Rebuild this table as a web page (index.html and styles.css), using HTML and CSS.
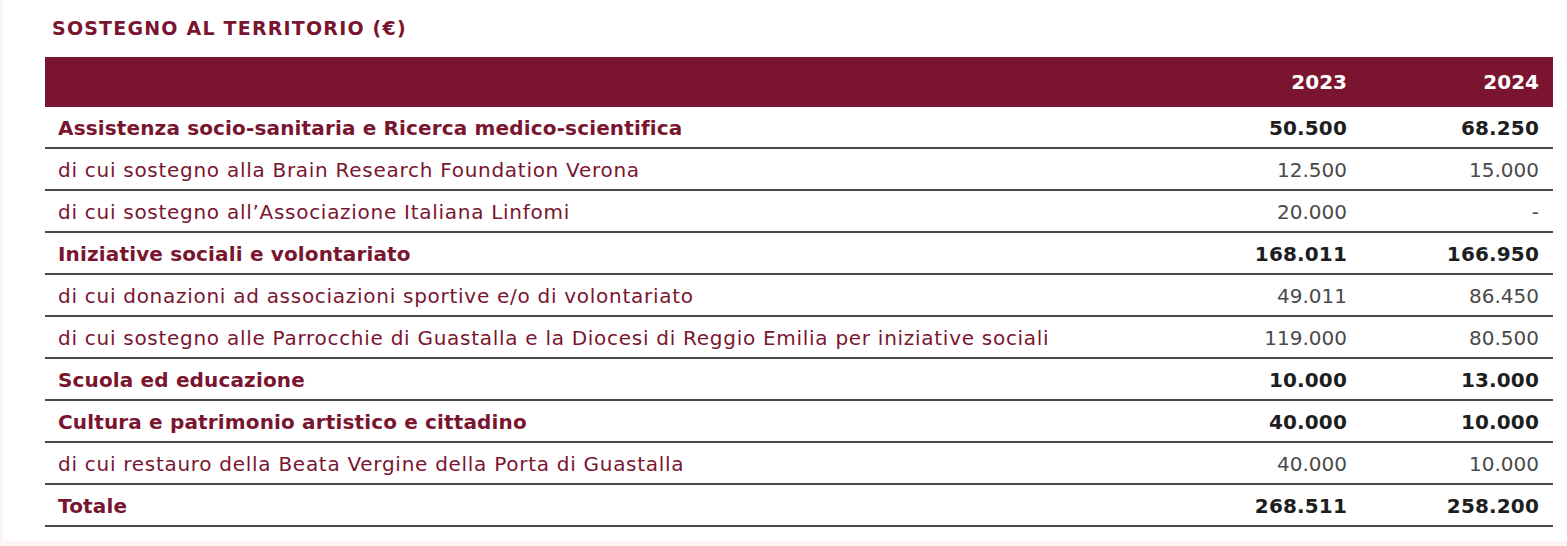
FILE: index.html
```html
<!DOCTYPE html>
<html lang="it">
<head>
<meta charset="utf-8">
<title>Sostegno al territorio</title>
<link rel="stylesheet" href="styles.css">
</head>
<body>
<div class="card">
  <h2 class="title">SOSTEGNO AL TERRITORIO (€)</h2>
  <table class="tbl">
    <thead>
      <tr><th class="lbl"></th><th class="num c1">2023</th><th class="num c2">2024</th></tr>
    </thead>
    <tbody>
      <tr class="main"><td class="lbl">Assistenza socio-sanitaria e Ricerca medico-scientifica</td><td class="num c1">50.500</td><td class="num c2">68.250</td></tr>
      <tr class="sub"><td class="lbl">di cui sostegno alla Brain Research Foundation Verona</td><td class="num c1">12.500</td><td class="num c2">15.000</td></tr>
      <tr class="sub"><td class="lbl">di cui sostegno all’Associazione Italiana Linfomi</td><td class="num c1">20.000</td><td class="num c2">-</td></tr>
      <tr class="main"><td class="lbl">Iniziative sociali e volontariato</td><td class="num c1">168.011</td><td class="num c2">166.950</td></tr>
      <tr class="sub"><td class="lbl">di cui donazioni ad associazioni sportive e/o di volontariato</td><td class="num c1">49.011</td><td class="num c2">86.450</td></tr>
      <tr class="sub"><td class="lbl">di cui sostegno alle Parrocchie di Guastalla e la Diocesi di Reggio Emilia per iniziative sociali</td><td class="num c1">119.000</td><td class="num c2">80.500</td></tr>
      <tr class="main"><td class="lbl">Scuola ed educazione</td><td class="num c1">10.000</td><td class="num c2">13.000</td></tr>
      <tr class="main"><td class="lbl">Cultura e patrimonio artistico e cittadino</td><td class="num c1">40.000</td><td class="num c2">10.000</td></tr>
      <tr class="sub"><td class="lbl">di cui restauro della Beata Vergine della Porta di Guastalla</td><td class="num c1">40.000</td><td class="num c2">10.000</td></tr>
      <tr class="main"><td class="lbl">Totale</td><td class="num c1">268.511</td><td class="num c2">258.200</td></tr>
    </tbody>
  </table>
</div>
</body>
</html>
```

FILE: styles.css
```css
html, body {
  margin: 0;
  padding: 0;
  background: #fbf3f4;
}
body {
  width: 1567px;
  height: 546px;
  font-family: "DejaVu Sans", "Noto Sans", sans-serif;
}
.card {
  margin-left: 3px;
  width: 1564px;
  height: 541px;
  background: #ffffff;
  padding: 14px 0 0 42px;
  box-sizing: border-box;
}
.title {
  margin: 0 0 0 7px;
  font-size: 19px;
  font-weight: 700;
  color: #7a1530;
  line-height: 28px;
  letter-spacing: 1.2px;
}
.tbl {
  margin-top: 15px;
  width: 1508px;
  border-collapse: collapse;
  font-size: 20px;
}
.tbl thead th {
  background: #7b1430;
  color: #ffffff;
  height: 50px;
  padding: 0;
  font-weight: 700;
  vertical-align: middle;
}
.tbl td {
  height: 38px;
  padding: 2px 0 0 0;
  border-bottom: 2px solid #4a4a4a;
  vertical-align: middle;
  letter-spacing: 0.72px;
}
.lbl {
  text-align: left;
  padding-left: 13px !important;
  color: #7a1530;
}
.num {
  text-align: right;
  padding-right: 14px !important;
}
.c1 {
  width: 160px;
}
.c2 {
  width: 178px;
}
.main td {
  font-weight: 700;
  letter-spacing: 0.15px;
}
.main td.num {
  color: #1e1e1e;
}
.sub td.num {
  color: #4a4a4a;
  letter-spacing: 0;
}
```
